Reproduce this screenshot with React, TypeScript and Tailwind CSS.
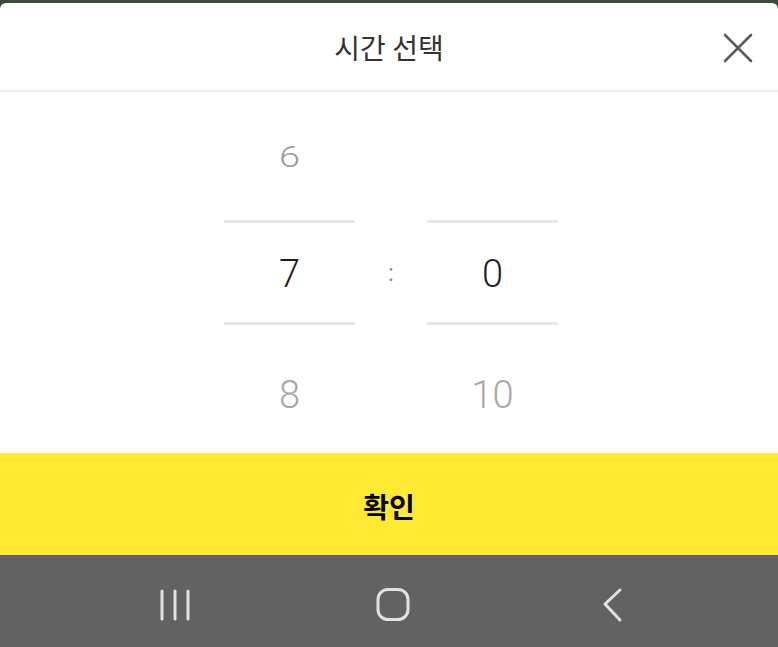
import { useState } from 'react';

const hours = { prev: '6', current: '7', next: '8' };
const minutes = { prev: '', current: '0', next: '10' };

function CloseIcon() {
  return (
    <svg width="30" height="30" viewBox="0 0 30 30" fill="none" stroke="#5a5a5a" strokeWidth="2.6" strokeLinecap="round">
      <path d="M2 2 L28 28" />
      <path d="M28 2 L2 28" />
    </svg>
  );
}

function Column({ prev, current, next }: { prev: string; current: string; next: string }) {
  return (
    <div className="flex w-[131px] flex-col font-light">
      <div className="flex h-[128px] items-center justify-center pt-[2px] text-[38px] text-[#9c9c9c]">
        <span className="inline-block scale-y-[0.8]">{prev}</span>
      </div>
      <div className="h-[3px] bg-[#e6e6e6]" />
      <div className="flex h-[99px] items-center justify-center pt-[3px] text-[38px] text-[#1e1e1e]">{current}</div>
      <div className="h-[3px] bg-[#e6e6e6]" />
      <div className="flex flex-1 items-center justify-center pt-[12px] text-[38px] text-[#a8a8a8]">{next}</div>
    </div>
  );
}

export default function App() {
  const [open, setOpen] = useState(true);

  return (
    <div className="flex h-[647px] w-full flex-col overflow-hidden bg-[#3c4a3c]" style={{ fontFamily: 'Roboto, "Noto Sans CJK KR", sans-serif' }}>
      <div className="mt-[3px] flex flex-1 flex-col rounded-t-[6px] bg-white">
        <div className="relative flex h-[89px] items-center justify-center border-b-2 border-[#eeeeee]">
          <h1 className="text-[28px] text-[#333333]" style={{ fontFamily: '"Noto Sans CJK KR", sans-serif' }}>
            시간 선택
          </h1>
          <button
            type="button"
            onClick={() => setOpen(!open)}
            className="absolute right-[25px] top-[30px] flex h-[30px] w-[30px] items-center justify-center"
          >
            <CloseIcon />
          </button>
        </div>

        <div className="flex h-[361px] justify-center pl-[4px]">
          <Column {...hours} />
          <div className="flex w-[72px] flex-col">
            <div className="h-[131px]" />
            <div className="flex h-[99px] items-center justify-center pt-[1px] text-[24px] text-[#8a8a8a]">:</div>
          </div>
          <Column {...minutes} />
        </div>

        <button
          type="button"
          className="flex h-[102px] items-center justify-center bg-[#ffe933] pt-[4px] text-[28px] font-bold text-black"
          style={{ fontFamily: '"Noto Sans CJK KR", sans-serif' }}
        >
          확인
        </button>
      </div>

      <nav className="flex h-[92px] items-center bg-[#626262] pl-[158px] pt-[8px] text-[#e2e2e2]">
        <svg width="34" height="34" viewBox="0 0 34 34" fill="none" stroke="currentColor" strokeWidth="3" strokeLinecap="round">
          <path d="M4 3 V31" />
          <path d="M17 3 V31" />
          <path d="M30 3 V31" />
        </svg>
        <svg className="ml-[183px]" width="36" height="36" viewBox="0 0 36 36" fill="none" stroke="currentColor" strokeWidth="3">
          <rect x="3" y="2.5" width="30" height="30" rx="10" />
        </svg>
        <svg className="ml-[189px]" width="24" height="36" viewBox="0 0 24 36" fill="none" stroke="currentColor" strokeWidth="3" strokeLinecap="round" strokeLinejoin="round">
          <path d="M20 3 L5 17 L20 33" />
        </svg>
      </nav>
    </div>
  );
}
